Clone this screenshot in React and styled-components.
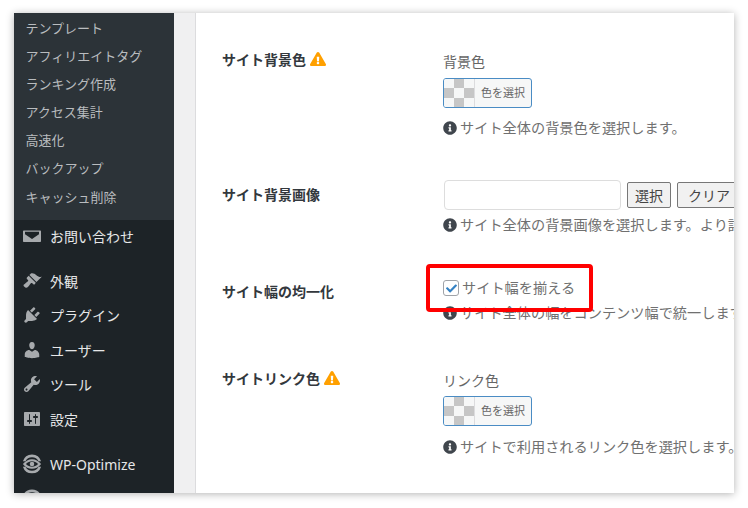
import React from 'react';
import styled, { createGlobalStyle } from 'styled-components';
import { FaExclamationTriangle, FaInfoCircle, FaCheck } from 'react-icons/fa';

const GlobalStyle = createGlobalStyle`
  html, body {
    margin: 0;
    background: #fff;
    font-family: "Noto Sans", "Noto Sans CJK JP", sans-serif;
  }
`;

const Frame = styled.div`
  display: flex;
  width: 720px;
  height: 480px;
  margin: 13px 14px;
  overflow: hidden;
  box-shadow: 0 1px 8px rgba(0, 0, 0, 0.3);
`;

const Sidebar = styled.div`
  width: 160px;
  flex-shrink: 0;
  background: #1d2327;
`;

const Submenu = styled.div`
  background: #2c3338;
  padding: 1px 0 9.7px;
`;

const SubItem = styled.div`
  height: 28.1px;
  line-height: 28px;
  padding-left: 11.5px;
  font-size: 13px;
  color: #b9bcbf;
`;

const MenuItem = styled.div`
  display: flex;
  align-items: center;
  gap: 8px;
  height: 34.5px;
  box-sizing: border-box;
  padding: 0 0 3px 8px;
  margin-top: ${(p) => p.$sep || 0}px;
  font-size: 14px;
  color: #e6e7e8;
  svg {
    flex-shrink: 0;
    fill: #a7aaad;
  }
`;

const Gutter = styled.div`
  width: 22px;
  flex-shrink: 0;
  background: #f0f0f1;
  border-right: 1px solid #dcdcde;
  box-sizing: border-box;
`;

const Panel = styled.div`
  flex: 1;
  min-width: 0;
  background: #fff;
  padding-top: 37px;
  overflow: hidden;
`;

const Row = styled.div`
  position: relative;
  display: flex;
  height: ${(p) => p.$height}px;
  padding-left: 26px;
`;

const RowLabel = styled.div`
  display: flex;
  align-items: center;
  gap: 4px;
  width: 221px;
  height: 20px;
  flex-shrink: 0;
  margin-top: ${(p) => p.$top}px;
  font-size: 14px;
  font-weight: 700;
  color: #33383d;
  svg {
    color: #ffa000;
    font-size: 16px;
  }
`;

const Control = styled.div`
  padding-top: ${(p) => p.$top}px;
  white-space: nowrap;
`;

const FieldName = styled.div`
  height: 20px;
  line-height: 20px;
  font-size: 14px;
  color: #666;
`;

const Picker = styled.div`
  display: flex;
  width: 89px;
  height: 30px;
  margin-top: ${(p) => p.$top}px;
  box-sizing: border-box;
  border: 1px solid #4a8cc4;
  border-radius: 3px;
  overflow: hidden;
  background: #f6f7f7;
`;

const Swatch = styled.span`
  width: 30px;
  flex-shrink: 0;
  border-right: 1px solid #dcdcde;
  background: repeating-conic-gradient(#c6c6c6 0 25%, #f6f7f7 0 50%) 0 -1px / 20px 20px;
`;

const PickerText = styled.span`
  flex: 1;
  text-align: center;
  line-height: 27px;
  font-size: 11px;
  color: #666;
`;

const Help = styled.div`
  display: flex;
  align-items: center;
  gap: 3px;
  height: 20px;
  margin-top: ${(p) => p.$top}px;
  font-size: 14.2px;
  line-height: 18px;
  color: #707070;
  svg {
    color: #40464d;
    font-size: 14px;
    flex-shrink: 0;
  }
`;

const FileRow = styled.div`
  display: flex;
  align-items: center;
  gap: 6px;
  margin-left: 1px;
`;

const TextInput = styled.input`
  width: 177px;
  height: 30px;
  box-sizing: border-box;
  border: 1px solid #ddd;
  border-radius: 4px;
  background: #fff;
`;

const Button = styled.button`
  height: 26px;
  padding: 0;
  width: ${(p) => p.$width}px;
  flex-shrink: 0;
  box-sizing: border-box;
  border: 1px solid #777;
  border-radius: 2px;
  background: #f1f1f1;
  font-family: inherit;
  font-size: 14px;
  color: #444;
`;

const CheckLine = styled.label`
  display: flex;
  align-items: center;
  gap: 3px;
  height: 20px;
  font-size: 14.2px;
  line-height: 18px;
  color: #707070;
`;

const CheckBox = styled.span`
  display: flex;
  align-items: center;
  justify-content: center;
  width: 16px;
  height: 16px;
  box-sizing: border-box;
  border: 1px solid #a0a3a8;
  border-radius: 3px;
  background: #fff;
  color: #3582c4;
  font-size: 11px;
`;

const Highlight = styled.div`
  position: absolute;
  left: 230px;
  top: -4px;
  width: 167px;
  height: 48px;
  box-sizing: border-box;
  border: 4px solid #f00;
  border-radius: 4px;
`;

const subItems = ['テンプレート', 'アフィリエイトタグ', 'ランキング作成', 'アクセス集計', '高速化', 'バックアップ', 'キャッシュ削除'];

const Dash = ({ d }) => (
  <svg width="20" height="20" viewBox="0 0 20 20">
    <path d={d} />
  </svg>
);

const icons = {
  mail: 'M2 4.500h16c.6 0 1 .4 1 1v9.500c0 .6-.4 1-1 1H2c-.6 0-1-.4-1-1V5.500c0-.6.4-1 1-1zm1 1.800L10 11l7-4.700V5.800H3zm0 0v1.900L10 13l7-4.800V6.300L10 11z',
  brush: 'M14.480 11.060L7.410 3.990l1.500-1.500c.5-.56 2.300-.47 3.510.32 1.210.8 1.430 1.280 2.910 2.100 1.180.64 2.450 1.260 4.450.85zm-.71.71L6.700 4.700 4.930 6.470c-.39.39-.39 1.020 0 1.410l1.060 1.060c.39.39.39 1.030 0 1.420-.6.6-1.430 1.110-2.210 1.690-.35.26-.7.53-1.010.84C1.430 13.230 1 14.400 2.410 15.820c1.420 1.410 2.590.99 3.930-.36.31-.31.58-.66.85-1.020.57-.78 1.080-1.610 1.690-2.210.39-.39 1.020-.39 1.410 0l1.060 1.060c.39.39 1.020.39 1.410 0z',
  plug: 'M13.110 4.360L9.870 7.600 8 5.730l3.240-3.240c.35-.34 1.050-.2 1.560.32.52.51.66 1.210.31 1.550zm-8 1.770l.91-1.120 9.010 9.010-1.190.84c-.71.71-2.630 1.160-3.820 1.160H6.140L4.900 17.260c-.59.59-1.540.59-2.120 0-.59-.58-.59-1.530 0-2.120l1.240-1.240v-3.880c0-1.130.4-3.190 1.090-3.890zm7.260 3.970l3.240-3.240c.34-.35 1.040-.21 1.550.31.52.51.66 1.210.31 1.550l-3.240 3.250z',
  user: 'M10 9.250c-2.270 0-2.730-3.440-2.730-3.440C7 4.020 7.820 2 9.970 2c2.160 0 2.980 2.020 2.710 3.810 0 0-.41 3.440-2.680 3.440zm0 2.570L12.720 10c2.390 0 4.520 2.330 4.520 4.530v2.490s-3.650 1.130-7.240 1.130c-3.650 0-7.240-1.130-7.240-1.130v-2.490c0-2.250 1.940-4.480 4.470-4.480z',
  wrench: 'M16.680 9.770c-1.340 1.340-3.300 1.670-4.950.99l-5.410 6.520c-.99.99-2.590.99-3.580 0s-.99-2.590 0-3.570l6.520-5.420c-.68-1.650-.35-3.610.99-4.950 1.280-1.280 3.120-1.620 4.720-1.060l-2.890 2.890 2.820 2.820 2.860-2.870c.53 1.580.18 3.390-1.080 4.650zM3.810 16.210c.4.39 1.040.39 1.430 0 .4-.4.4-1.040 0-1.430-.39-.4-1.030-.4-1.430 0-.39.39-.39 1.030 0 1.430z',
  sliders: 'M18 16V4c0-.55-.45-1-1-1H3c-.55 0-1 .45-1 1v12c0 .55.45 1 1 1h14c.55 0 1-.45 1-1zM8 11h1c.55 0 1 .45 1 1s-.45 1-1 1H8v1.500c0 .28-.22.5-.5.5s-.5-.22-.5-.5V13H6c-.55 0-1-.45-1-1s.45-1 1-1h1V5.500c0-.28.22-.5.5-.5s.5.22.5.5V11zm5-2h-1c-.55 0-1-.45-1-1s.45-1 1-1h1V5.500c0-.28.22-.5.5-.5s.5.22.5.5V7h1c.55 0 1 .45 1 1s-.45 1-1 1h-1v5.500c0 .28-.22.5-.5.5s-.5-.22-.5-.5V9z',
};

// WP-Optimize mark: broken ring round an eye
const OptimizeIcon = () => (
  <svg width="20" height="20" viewBox="0 0 22 22">
    <path d="M11 .5a10.500 10.500 0 0 1 10 7.500h-2.800a8 8 0 0 0-14.400 0H1A10.500 10.500 0 0 1 11 .5zM1 14h2.800a8 8 0 0 0 14.400 0H21a10.500 10.500 0 0 1-20 0z" />
    <path d="M1 11C3.800 7.300 7.300 5.700 11 5.700S18.200 7.300 21 11c-2.800 3.700-6.300 5.300-10 5.300S3.800 14.700 1 11zm3.300 0c2 2.100 4.200 3 6.700 3s4.700-.9 6.700-3c-2-2.100-4.200-3-6.700-3s-4.700.9-6.700 3z" />
    <circle cx="11" cy="11" r="2.500" />
  </svg>
);

const PickerButton = ({ top }) => (
  <Picker $top={top}>
    <Swatch />
    <PickerText>色を選択</PickerText>
  </Picker>
);

export default function App() {
  return (
    <>
      <GlobalStyle />
      <Frame>
        <Sidebar>
          <Submenu>
            {subItems.map((item) => (
              <SubItem key={item}>{item}</SubItem>
            ))}
          </Submenu>
          <MenuItem><Dash d={icons.mail} />お問い合わせ</MenuItem>
          <MenuItem $sep={10}><Dash d={icons.brush} />外観</MenuItem>
          <MenuItem><Dash d={icons.plug} />プラグイン</MenuItem>
          <MenuItem><Dash d={icons.user} />ユーザー</MenuItem>
          <MenuItem><Dash d={icons.wrench} />ツール</MenuItem>
          <MenuItem><Dash d={icons.sliders} />設定</MenuItem>
          <MenuItem $sep={11}><OptimizeIcon />WP-Optimize</MenuItem>
          <MenuItem><OptimizeIcon />アナリティクス</MenuItem>
        </Sidebar>
        <Gutter />
        <Panel>
          <Row $height={118}>
            <RowLabel $top={-1}>サイト背景色<FaExclamationTriangle /></RowLabel>
            <Control $top={2}>
              <FieldName>背景色</FieldName>
              <PickerButton top={6} />
              <Help $top={10}><FaInfoCircle />サイト全体の背景色を選択します。</Help>
            </Control>
          </Row>
          <Row $height={100}>
            <RowLabel $top={16}>サイト背景画像</RowLabel>
            <Control $top={12}>
              <FileRow>
                <TextInput />
                <Button $width={44}>選択</Button>
                <Button $width={64}>クリア</Button>
              </FileRow>
              <Help $top={5}><FaInfoCircle />サイト全体の背景画像を選択します。より詳しく設定できます。</Help>
            </Control>
          </Row>
          <Row $height={101}>
            <RowLabel $top={13}>サイト幅の均一化</RowLabel>
            <Control $top={10}>
              <CheckLine>
                <CheckBox><FaCheck /></CheckBox>
                サイト幅を揃える
              </CheckLine>
              <Help $top={5}><FaInfoCircle />サイト全体の幅をコンテンツ幅で統一します。</Help>
            </Control>
            <Highlight />
          </Row>
          <Row $height={100}>
            <RowLabel $top={-1}>サイトリンク色<FaExclamationTriangle /></RowLabel>
            <Control $top={2}>
              <FieldName>リンク色</FieldName>
              <PickerButton top={5} />
              <Help $top={11}><FaInfoCircle />サイトで利用されるリンク色を選択します。</Help>
            </Control>
          </Row>
        </Panel>
      </Frame>
    </>
  );
}
